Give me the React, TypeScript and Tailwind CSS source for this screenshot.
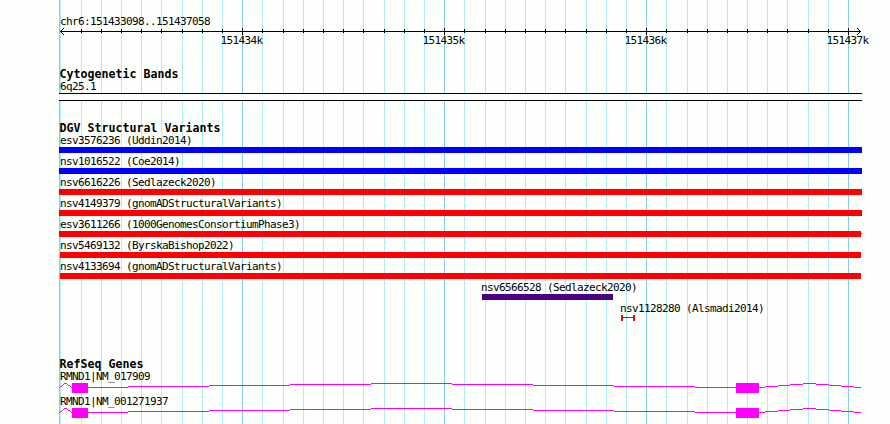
import React from "react";

const MINOR = [60, 81, 101, 121, 141, 161, 182, 202, 222, 262, 283, 303, 323, 343, 363, 384, 404, 424, 464, 485, 505, 525, 545, 565, 586, 606, 626, 666, 687, 707, 727, 747, 767, 787, 808, 828];
const MAJOR = [59, 242, 444, 646, 848];

const variants = [
  { name: "esv3576236 (Uddin2014)", bar: "bg-[#0000ff]" },
  { name: "nsv1016522 (Coe2014)", bar: "bg-[#0000ff]" },
  { name: "nsv6616226 (Sedlazeck2020)", bar: "bg-[#ff0000]" },
  { name: "nsv4149379 (gnomADStructuralVariants)", bar: "bg-[#ff0000]" },
  { name: "esv3611266 (1000GenomesConsortiumPhase3)", bar: "bg-[#ff0000] mr-px", continues: true },
  { name: "nsv5469132 (ByrskaBishop2022)", bar: "bg-[#ff0000] mx-px" },
  { name: "nsv4133694 (gnomADStructuralVariants)", bar: "bg-[#ff0000] mx-px" },
];

function Label({ children, className = "" }: { children: React.ReactNode; className?: string }) {
  return (
    <div className={`h-[11px] whitespace-pre font-['DejaVu_Sans_Mono',monospace] text-[11px] leading-[11px] tracking-[-0.622px] ${className}`}>
      {children}
    </div>
  );
}

function Heading({ children }: { children: React.ReactNode }) {
  return (
    <h2 className="h-[12px] whitespace-pre pl-[0.5px] font-['DejaVu_Sans_Mono',monospace] text-[11.6px] font-bold leading-[10px] tracking-[0.016px]">
      {children}
    </h2>
  );
}

function GridLines() {
  return (
    <svg className="absolute inset-0" width="890" height="424" shapeRendering="crispEdges">
      {MINOR.map((x) => <rect key={x} x={x} y="0" width="1" height="424" fill="#afeeee" />)}
      {MAJOR.map((x) => <rect key={x} x={x} y="0" width="1" height="424" fill="#87ceeb" />)}
    </svg>
  );
}

function Axis() {
  return (
    <svg className="block" width="803" height="7" viewBox="59 28 803 7" shapeRendering="crispEdges">
      <rect x="60" y="31" width="801" height="1" />
      {MINOR.slice(1).map((x) => <rect key={x} x={x} y="29" width="1" height="4" />)}
      {MAJOR.slice(1).map((x) => <rect key={x} x={x} y="28" width="1" height="7" />)}
      {[1, 2, 3].map((d) => (
        <g key={d}>
          <rect x={60 + d} y={31 - d} width="1" height="1" />
          <rect x={60 + d} y={31 + d} width="1" height="1" />
          <rect x={860 - d} y={31 - d} width="1" height="1" />
          <rect x={860 - d} y={31 + d} width="1" height="1" />
        </g>
      ))}
    </svg>
  );
}

const SEGMENTS = [
  [59, 60, 4], [60, 62, 3], [62, 63, 2], [63, 64, 1], [64, 67, 0], [67, 68, 1], [68, 70, 2], [70, 71, 3], [71, 72, 4],
  [88, 128, 4], [128, 209, 3], [209, 290, 2], [290, 371, 1], [371, 452, 0], [452, 533, 1], [533, 614, 2], [614, 695, 3], [695, 736, 4],
  [759, 765, 4], [765, 778, 3], [778, 790, 2], [790, 803, 1], [803, 816, 0], [816, 829, 1], [829, 841, 2], [841, 854, 3], [854, 861, 4],
];

function Gene({ name }: { name: string }) {
  return (
    <div className="h-[25px]">
      <Label className="pl-px">{name}</Label>
      <svg className="block" width="803" height="11" viewBox="59 0 803 11" fill="#ff00ff" shapeRendering="crispEdges">
        {SEGMENTS.map(([a, b, y]) => <rect key={a} x={a} y={y + 1} width={b - a} height="1" />)}
        <rect x="72" y="1" width="16" height="10" />
        <rect x="736" y="1" width="23" height="10" />
      </svg>
    </div>
  );
}

export default function App() {
  return (
    <main className="relative h-[424px] w-[890px] overflow-hidden bg-[#fdfffc] text-black">
      <GridLines />
      <div className="relative ml-[59px] w-[803px]">
        <header className="pt-[16px]">
          <Label className="pl-px">chr6:151433098..151437058</Label>
          <div className="mt-px"><Axis /></div>
          <div className="flex h-[11px]">
            {["151434k", "151435k", "151436k", "151437k"].map((t, i) => (
              <Label key={t} className={i === 0 ? "ml-[161.5px] w-[42px] shrink-0" : "ml-[160px] w-[42px] shrink-0"}>{t}</Label>
            ))}
          </div>
        </header>
        <section className="pt-[23px]">
          <Heading>Cytogenetic Bands</Heading>
          <Label className="pl-px">6q25.1</Label>
          <div className="mt-px h-[8px] border-y border-black bg-[#fdfffc]" />
        </section>
        <section className="pt-[22px]">
          <Heading>DGV Structural Variants</Heading>
          {variants.map((v) => (
            <div key={v.name} className="h-[21px]">
              <Label className="pl-px">{v.name}</Label>
              <div className="mt-px flex h-[6px] items-start">
                <div className={`h-[6px] flex-1 ${v.bar}`} />
                {v.continues && <div className="-ml-px mt-[2px] h-px w-px bg-[#ff0000]" />}
              </div>
            </div>
          ))}
          <div className="ml-[422px] h-[21px]">
            <Label>nsv6566528 (Sedlazeck2020)</Label>
            <div className="ml-px mt-[1px] h-[6px] w-[131px] bg-[#4b0082]" />
          </div>
          <div className="ml-[561px] h-[21px]">
            <Label>nsv1128280 (Alsmadi2014)</Label>
            <div className="ml-px mt-[1px] flex h-[6px] w-[14px]">
              <div className="w-[2px] bg-[#ff0000]" />
              <div className="mt-[2px] h-px flex-1 bg-[#ff0000]" />
              <div className="w-[2px] bg-[#ff0000]" />
            </div>
          </div>
        </section>
        <section className="pt-[35px]">
          <Heading>RefSeq Genes</Heading>
          <Gene name="RMND1|NM_017909" />
          <Gene name="RMND1|NM_001271937" />
        </section>
      </div>
    </main>
  );
}
